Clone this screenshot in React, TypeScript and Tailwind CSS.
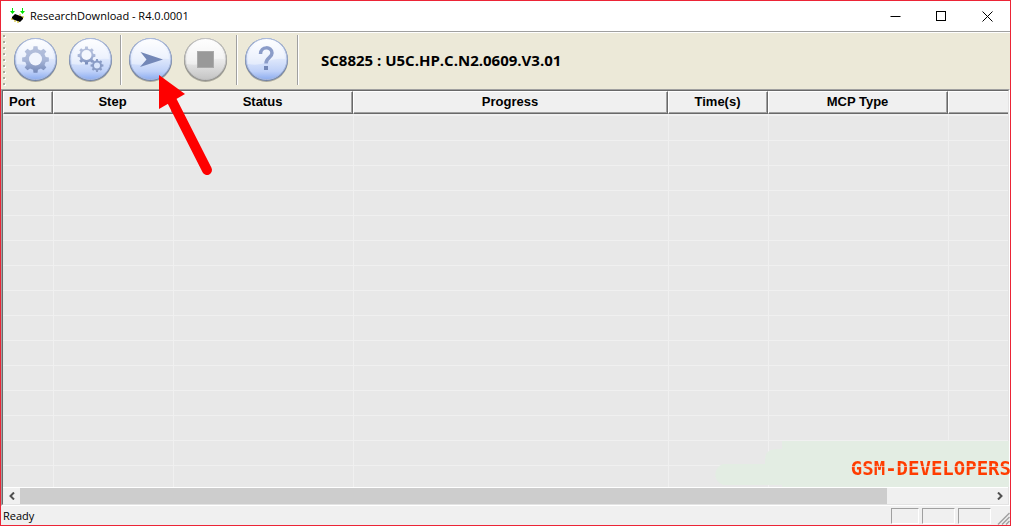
import React from 'react';

type Column = {
    label: string;
    width: string;
    align: string;
};

const columns: Column[] = [
    { label: "Port", width: "w-[50px]", align: "text-left pl-[5px]" },
    { label: "Step", width: "w-[120px]", align: "text-center" },
    { label: "Status", width: "w-[180px]", align: "text-center" },
    { label: "Progress", width: "w-[315px]", align: "text-center" },
    { label: "Time(s)", width: "w-[100px]", align: "text-center" },
    { label: "MCP Type", width: "w-[180px]", align: "text-center" },
    { label: "", width: "", align: "border-r-0" },
];

const ROW_COUNT = 15;

// Outline of a toothed wheel centred on cx, cy
const gearPath = (cx: number, cy: number, outer: number, inner: number, teeth: number) => {
    const points: string[] = [];
    const step = (Math.PI * 2) / teeth;
    for (let i = 0; i < teeth; i++) {
        const a = i * step - Math.PI / 2;
        const corners: [number, number][] = [
            [inner, -0.3],
            [outer, -0.19],
            [outer, 0.19],
            [inner, 0.3],
        ];
        corners.forEach(([r, t]) => {
            points.push(`${(cx + r * Math.cos(a + t * step)).toFixed(2)} ${(cy + r * Math.sin(a + t * step)).toFixed(2)}`);
        });
    }
    return `M${points.join("L")}Z`;
};

const AppIcon = () => (
    <svg width="16" height="16" viewBox="0 0 16 16" aria-hidden="true">
        <path d="M3.500 0v4M13.500 0v4" stroke="#00e400" strokeWidth="1" />
        <path d="M1 3h5L3.500 6zM11 3h5l-2.500 3z" fill="#00e400" />
        <path d="M3 9l3-3 8 3v2l-3 3-8-3z" fill="#000" />
        <path d="M2 11h2M5 13h2M8 14h2M10 7h2M13 9h2" stroke="#c8b400" strokeWidth="1" />
    </svg>
);

const ToolButton = ({ label, gray = false, children }: { label: string; gray?: boolean; children: React.ReactNode }) => (
    <button type="button" aria-label={label} className="size-[46px] shrink-0">
        <svg width="46" height="46" viewBox="0 0 46 46" aria-hidden="true">
            <circle cx="22.500" cy="23.500" r="21.500" fill="#6b6b62" opacity="0.5" />
            <circle cx="22.500" cy="22.500" r="21.500" fill={gray ? "#8c8c8c" : "#6079ae"} opacity="0.8" />
            <circle cx="22.500" cy="22" r="20.500" fill={gray ? "url(#rim-gray)" : "url(#rim-blue)"} stroke={gray ? "#c2c2c2" : "#a9b9dd"} strokeWidth="1" />
            <path d="M4 22a18.500 18.500 0 0 1 37 0Q31 21 23 25T4 27z" fill="#fff" opacity="0.4" />
            {children}
        </svg>
    </button>
);

const Separator = () => <div className="h-[50px] w-0.5 border-l border-[#a0a0a0] border-r border-r-white" />;

const Toolbar = () => (
    <div className="flex h-14 shrink-0 items-center bg-[#ece9d8] pb-0.5 pl-0.5">
        <svg width="0" height="0" className="absolute" aria-hidden="true">
            <defs>
                <linearGradient id="rim-blue" x1="0" y1="0" x2="0" y2="1">
                    <stop offset="0" stopColor="#ffffff" />
                    <stop offset="0.45" stopColor="#e3ebfc" />
                    <stop offset="0.8" stopColor="#bfd1f8" />
                    <stop offset="1" stopColor="#8dadf0" />
                </linearGradient>
                <linearGradient id="rim-gray" x1="0" y1="0" x2="0" y2="1">
                    <stop offset="0" stopColor="#ffffff" />
                    <stop offset="0.5" stopColor="#ececec" />
                    <stop offset="1" stopColor="#c4c4c4" />
                </linearGradient>
                <linearGradient id="ink" x1="0" y1="0" x2="0" y2="1">
                    <stop offset="0" stopColor="#b6c1dc" />
                    <stop offset="0.5" stopColor="#a9b7d8" />
                    <stop offset="1" stopColor="#7488b8" />
                </linearGradient>
            </defs>
        </svg>
        <svg width="4" height="54" viewBox="0 0 4 54" className="mr-1.5" aria-hidden="true">
            {Array.from({ length: 9 }, (_, i) => (
                <g key={i}>
                    <rect x="1" y={i * 6 + 3} width="2" height="2" fill="#fff" />
                    <rect x="0" y={i * 6 + 2} width="2" height="2" fill="#a8a698" />
                </g>
            ))}
        </svg>
        <div className="flex gap-[9px]">
            <ToolButton label="Load packet">
                <path d={gearPath(22.5, 22.5, 13.5, 10.5, 8)} fill="url(#ink)" />
                <circle cx="22.500" cy="22" r="6.500" fill="#f1f5fe" />
            </ToolButton>
            <ToolButton label="Settings">
                <path d={gearPath(18.5, 18.5, 9, 7, 8)} fill="url(#ink)" />
                <circle cx="18.500" cy="18" r="5" fill="#f4f7fe" />
                <path d={gearPath(29, 28.5, 6.5, 5, 8)} fill="#8a9cc6" />
                <circle cx="29" cy="28.500" r="3" fill="#dbe6fc" />
            </ToolButton>
        </div>
        <div className="mr-1.5 ml-1.5"><Separator /></div>
        <div className="flex gap-[9px]">
            <ToolButton label="Start downloading">
                <path d="M12.500 15L35 22.500L12 30L18.500 22.500Z" fill="#7387b7" />
            </ToolButton>
            <ToolButton label="Stop" gray>
                <rect x="14.500" y="14.500" width="16" height="16" fill="#999" stroke="#aaa" strokeWidth="1" />
            </ToolButton>
        </div>
        <div className="mr-1.5 ml-[7px]"><Separator /></div>
        <ToolButton label="Help">
            <path d="M16.500 17C16.500 9 28 9 28 16C28 21 22 20.500 22 26.500" fill="none" stroke="#8b9cc8" strokeWidth="3.500" />
            <rect x="20" y="29" width="4" height="4" fill="#7387b7" />
        </ToolButton>
        <div className="ml-[7px]"><Separator /></div>
        <h1 className="ml-[22px] font-['Open_Sans',sans-serif] text-[15px] font-bold whitespace-nowrap text-black">
            SC8825 : U5C.HP.C.N2.0609.V3.01
        </h1>
    </div>
);

const TitleBar = () => (
    <header className="flex h-[30px] shrink-0 items-center bg-white pl-2">
        <AppIcon />
        <span className="ml-[5px] flex-1 text-[11px] whitespace-nowrap">ResearchDownload - R4.0.0001</span>
        <button type="button" aria-label="Minimize" className="flex h-full w-[46px] items-center justify-center">
            <svg width="11" height="11" viewBox="0 0 11 11"><path d="M0.500 5.500h10" stroke="#000" /></svg>
        </button>
        <button type="button" aria-label="Maximize" className="flex h-full w-[46px] items-center justify-center">
            <svg width="11" height="11" viewBox="0 0 11 11"><rect x="0.500" y="0.500" width="9" height="9" fill="none" stroke="#000" /></svg>
        </button>
        <button type="button" aria-label="Close" className="flex h-full w-[46px] items-center justify-center">
            <svg width="11" height="11" viewBox="0 0 11 11"><path d="M0.500 0.500l10 10M10.500 0.500l-10 10" stroke="#000" /></svg>
        </button>
    </header>
);

const Watermark = () => (
    <div className="pointer-events-none absolute right-[-3px] bottom-0 h-[46px] w-[300px] overflow-hidden">
        <svg width="300" height="46" viewBox="0 0 300 46" className="absolute inset-0" aria-hidden="true">
            <path d="M71 0H298V46H71V44H12A11 11 0 0 1 12 23H54V19Q54 8 66 8H71Z" fill="#e3ede3" />
        </svg>
        <span className="absolute right-0 bottom-[7px] bg-linear-to-b from-[#ff3c00] from-40% via-[#e3ede3] via-40% to-[#ff3c00] to-48% bg-clip-text font-['DejaVu_Sans_Mono',monospace] text-[19px] leading-6 font-bold whitespace-nowrap text-transparent">
            GSM-DEVELOPERS
        </span>
    </div>
);

const ScrollBar = () => (
    <div className="flex h-4 shrink-0 bg-[#f0f0f0]">
        <button type="button" aria-label="Scroll left" className="flex w-[17px] items-center justify-center">
            <svg width="6" height="8" viewBox="0 0 6 8"><path d="M5 0.500L1.500 4L5 7.500" fill="none" stroke="#505050" strokeWidth="2" /></svg>
        </button>
        <div className="grow-[867] basis-0 bg-[#cdcdcd]" />
        <div className="grow-[104] basis-0" />
        <button type="button" aria-label="Scroll right" className="flex w-[17px] items-center justify-center">
            <svg width="6" height="8" viewBox="0 0 6 8"><path d="M1 0.500L4.500 4L1 7.500" fill="none" stroke="#505050" strokeWidth="2" /></svg>
        </button>
    </div>
);

const PortList = () => (
    <main className="flex min-h-0 flex-1 flex-col border-t border-r border-b border-l border-t-[#a0a0a0] border-r-white border-b-white border-l-[#a0a0a0]">
        <div className="flex min-h-0 flex-1 flex-col border-t border-r border-b border-l border-t-[#696969] border-r-[#e3e3e3] border-b-[#e3e3e3] border-l-[#696969]">
            <div className="relative min-h-0 flex-1 border-b border-white bg-[#e8e8e8]">
                <div className="h-full overflow-hidden">
                    <table className="w-full table-fixed border-separate border-spacing-0">
                        <thead>
                            <tr>
                                {columns.map((col, i) => (
                                    <th key={i} className={`${col.width} group border-b-2 border-[#f0f0f0] p-0`}>
                                        <div className="border-t border-r border-b border-l border-t-white border-r-[#696969] border-b-[#696969] border-l-white group-last:border-r-0">
                                            <div className={`${col.align} h-[21px] border-r border-b border-[#a0a0a0] bg-[#f0f0f0] font-['Liberation_Sans',sans-serif] text-[13px] leading-5 font-bold`}>
                                                {col.label}
                                            </div>
                                        </div>
                                    </th>
                                ))}
                            </tr>
                        </thead>
                        <tbody>
                            {Array.from({ length: ROW_COUNT }, (_, row) => (
                                <tr key={row} className="h-[25px]">
                                    {columns.map((_, i) => (
                                        <td key={i} className="border-b border-l border-[#f0f0f0] p-0 first:border-l-0" />
                                    ))}
                                </tr>
                            ))}
                        </tbody>
                    </table>
                </div>
                <Watermark />
            </div>
            <ScrollBar />
        </div>
    </main>
);

const StatusBar = () => (
    <footer className="flex h-[19px] shrink-0 items-center gap-[3px] bg-[#f0f0f0] pl-0.5">
        <span className="flex-1 pt-0.5 text-[11px]">Ready</span>
        <div className="h-4 w-7 border border-white border-t-[#a0a0a0] border-l-[#a0a0a0]" />
        <div className="h-4 w-[33px] border border-white border-t-[#a0a0a0] border-l-[#a0a0a0]" />
        <div className="h-4 w-[33px] border border-white border-t-[#a0a0a0] border-l-[#a0a0a0]" />
        <svg width="16" height="16" viewBox="0 0 16 16" className="self-end" aria-hidden="true">
            <path d="M4 15.500L15.500 4M8 15.500L15.500 8M12 15.500L15.500 12" stroke="#a0a0a0" strokeWidth="1.500" />
        </svg>
    </footer>
);

// Red pointer aimed at the start button
const Pointer = () => (
    <svg width="60" height="106" viewBox="0 0 60 106" className="pointer-events-none absolute top-[73px] left-[155px]" aria-hidden="true">
        <path d="M3 1L29 20L3 35Z" fill="#fe0000" />
        <path d="M15 25L51 96" stroke="#fe0000" strokeWidth="10" strokeLinecap="round" />
    </svg>
);

const App = () => {
    return (
        <div className="relative flex h-screen flex-col overflow-hidden border border-[#ec2436] bg-[#f0f0f0] font-['Open_Sans',sans-serif] text-black">
            <TitleBar />
            <div className="h-0.5 shrink-0 border-t border-b border-t-[#a0a0a0] border-b-white" />
            <Toolbar />
            <PortList />
            <StatusBar />
            <Pointer />
        </div>
    );
};

export default App;
